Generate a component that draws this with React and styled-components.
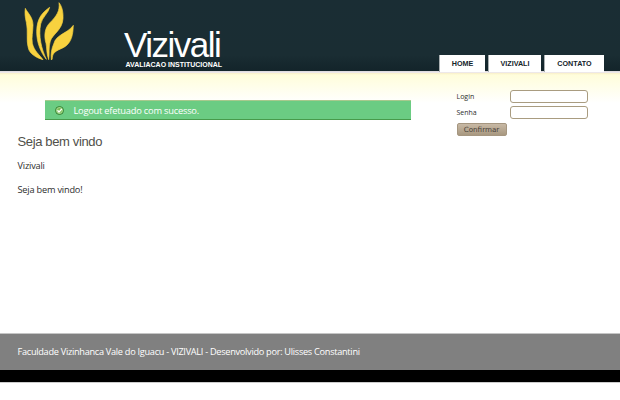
import React from "react";
import styled, { createGlobalStyle } from "styled-components";

const Global = createGlobalStyle`
  * { box-sizing: border-box; }
  body { margin: 0; background: #fff; font-family: "Open Sans", "Noto Sans", sans-serif; font-size: 9.3px; color: #2d2d2d; }
`;
const Page = styled.div`
  height: 400px;
  overflow: hidden;
  display: flex;
  flex-direction: column;
  background: #fff;
`;
const Header = styled.header`
  height: 73px;
  flex: none;
  display: flex;
  background: linear-gradient(#1a2d34 0, #1a2d33 55px, #13242a 71px, #d9d6da 71px, #f4eeee 73px);
`;
const Logo = styled.svg`
  width: 120px;
  height: 71px;
  flex: none;
  fill: #f8d23f;
  stroke: #f8d23f;
  stroke-width: 2px;
  stroke-linejoin: round;
`;
const Brand = styled.div`
  width: 319px;
  padding: 27px 0 0 4px;
  color: #fff;
  font-family: "Liberation Sans", Arial, sans-serif;
`;
const Title = styled.h1`
  margin: 0;
  height: 34px;
  font-size: 35px;
  line-height: 35px;
  font-weight: 400;
  letter-spacing: -1.5px;
`;
const Subtitle = styled.div`
  padding-left: 1.5px;
  font-size: 7px;
  line-height: 8px;
  font-weight: 700;
  white-space: nowrap;
`;
const Nav = styled.nav`
  display: flex;
  gap: 3px;
  height: 17px;
  margin-top: 55px;
`;
const Tab = styled.a`
  width: ${(p) => p.$width}px;
  color: #13242a;
  background: #fff;
  border-left: 1px solid #aab0b2;
  font: 700 7.2px/18px "Liberation Sans", Arial, sans-serif;
  text-align: center;
`;
const Main = styled.main`
  height: 260px;
  flex: none;
  display: flex;
  justify-content: space-between;
  padding: 0 32px 0 17px;
  background: linear-gradient(#f8efc9 0, #fffddb 2px, #fffee9 13px, #fff 30px);
`;
const Content = styled.section`
  width: 394px;
  padding-top: 27px;
`;
const Alert = styled.div`
  display: flex;
  align-items: center;
  height: 20px;
  margin-left: 28.4px;
  padding-left: 10px;
  gap: 9px;
  color: #fff;
  background: #6bcc83;
  border-top: 1px solid #a8c98d;
  border-bottom: 1px solid #479b4b;
  font-weight: 500;
  letter-spacing: -0.22px;
`;
const CheckIcon = styled.svg`
  width: 9px;
  height: 9px;
`;
const Heading = styled.h2`
  margin: 13px 0 0;
  padding-left: 0.5px;
  font: 400 13px/18px "Liberation Sans", Arial, sans-serif;
  letter-spacing: -0.36px;
  color: #50504a;
`;
const Paragraph = styled.p`
  margin: ${(p) => p.$top}px 0 0;
  padding-left: 0.5px;
  font-size: 9.2px;
  line-height: 12px;
  letter-spacing: -0.19px;
`;
const Form = styled.form`
  width: 131.5px;
  margin: 0;
  padding-top: 17px;
  font-size: 7px;
`;
const Field = styled.label`
  display: flex;
  justify-content: space-between;
  align-items: center;
  height: 13px;
  margin-bottom: 3px;
  line-height: 13px;
`;
const Input = styled.input`
  width: 78px;
  height: 13px;
  padding: 0 3px;
  border: 1px solid #a99c80;
  border-radius: 3px;
  background: #fff;
  font-size: 7px;
`;
const Button = styled.button`
  display: block;
  width: 50px;
  height: 13px;
  margin-top: 4px;
  padding: 0;
  border: 1px solid #a59680;
  border-radius: 2px;
  background: linear-gradient(#c8b9a5, #a89880);
  color: #48413a;
  font: 7.2px/10px "DejaVu Sans", sans-serif;
`;
const Footer = styled.footer`
  height: 50px;
  flex: none;
  padding: 12px 17.5px 0;
  color: #fff;
  background: linear-gradient(#c5c5c5 1px, #808080 1px, #808080 37px, #000 37px, #000 49px, #ccc 49px);
  font-size: 9.2px;
  line-height: 13px;
  letter-spacing: -0.29px;
  white-space: nowrap;
`;

export default function App() {
  return (
    <>
      <Global />
      <Page>
        <Header>
          <Logo viewBox="0 0 360 213">
            <path d="M76 25C82 38 99 51 99 75C99 95 94 112 97 130C102 153 120 166 129 179C110 174 88 161 85 144C78 120 85 94 79 67C75 51 74 38 76 25Z" />
            <path d="M149 22C145 40 127 51 122 72C115 109 124 145 139 178C122 157 110 128 110 94C111 53 128 37 149 22Z" />
            <path d="M177 8C187 20 190 39 189 56C187 90 157 103 151 123C145 143 149 161 146 179C139 159 141 144 138 130C131 106 135 83 149 69C171 47 180 32 177 8Z" />
            <path d="M220 76C219 94 218 113 207 128C193 148 169 147 160 162C155 170 159 178 154 180C152 160 155 146 161 132C169 102 201 102 220 76Z" />
          </Logo>
          <Brand>
            <Title>Vizivali</Title>
            <Subtitle>AVALIACAO INSTITUCIONAL</Subtitle>
          </Brand>
          <Nav>
            <Tab $width={46}>HOME</Tab>
            <Tab $width={53}>VIZIVALI</Tab>
            <Tab $width={60}>CONTATO</Tab>
          </Nav>
        </Header>
        <Main>
          <Content>
            <Alert>
              <CheckIcon viewBox="0 0 9 9">
                <circle cx="4.5" cy="4.5" r="4" fill="#79bd55" stroke="#37833a" />
                <circle cx="4.5" cy="4.5" r="3" fill="none" stroke="#c4e8b4" strokeWidth=".6" />
                <path d="M2.5 4.3 4 6 6.8 3" fill="none" stroke="#fff" strokeWidth="1.3" />
              </CheckIcon>
              <span>Logout efetuado com sucesso.</span>
            </Alert>
            <Heading>Seja bem vindo</Heading>
            <Paragraph $top={9}>Vizivali</Paragraph>
            <Paragraph $top={12}>Seja bem vindo!</Paragraph>
          </Content>
          <Form>
            <Field>Login<Input aria-label="Login" /></Field>
            <Field>Senha<Input type="password" aria-label="Senha" /></Field>
            <Button type="button">Confirmar</Button>
          </Form>
        </Main>
        <Footer>Faculdade Vizinhanca Vale do Iguacu - VIZIVALI - Desenvolvido por: Ulisses Constantini</Footer>
      </Page>
    </>
  );
}
